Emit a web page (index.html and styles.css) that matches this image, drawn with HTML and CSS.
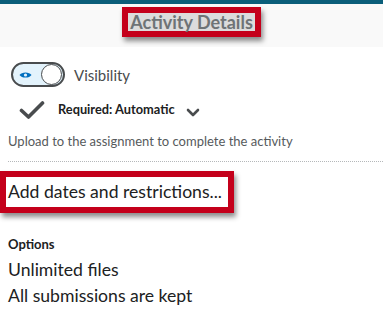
FILE: index.html
```html
<!DOCTYPE html>
<html lang="en">
<head>
  <meta charset="UTF-8">
  <title>Activity Details</title>
  <link rel="stylesheet" href="styles.css">
</head>
<body>

  <div class="top-bar"></div>

  <div class="header">
    <h1 class="header-title">Activity Details</h1>
  </div>

  <div class="panel">

    <div class="visibility-row">
      <div class="toggle">
        <svg class="toggle-eye" width="13" height="8" viewBox="0 0 13 8">
          <path d="M0.5 4 C2.5 0.6 10.5 0.6 12.5 4 C10.5 7.4 2.5 7.4 0.5 4 Z" fill="#006fbf"/>
          <circle cx="6.5" cy="4" r="1.6" fill="#e3f3fc"/>
        </svg>
        <span class="toggle-knob"></span>
      </div>
      <span class="visibility-label">Visibility</span>
    </div>

    <div class="required-row">
      <svg class="required-check" width="26" height="20" viewBox="0 0 26 20">
        <path d="M2.5 10.5 L9.5 17 L23.5 3" fill="none" stroke="#494c4e" stroke-width="3.6" stroke-linecap="round" stroke-linejoin="round"/>
      </svg>
      <span class="required-label">Required: Automatic</span>
      <svg class="required-chevron" width="14" height="9" viewBox="0 0 14 9">
        <path d="M2 2 L7 7 L12 2" fill="none" stroke="#494c4e" stroke-width="2.6" stroke-linecap="round" stroke-linejoin="round"/>
      </svg>
    </div>

    <p class="completion-note">Upload to the assignment to complete the activity</p>

    <hr class="divider">

    <div class="dates-link">Add dates and restrictions...</div>

    <h2 class="options-title">Options</h2>
    <p class="option-line">Unlimited files</p>
    <p class="option-line">All submissions are kept</p>

  </div>

</body>
</html>
```

FILE: styles.css
```css
* {
  margin: 0;
  padding: 0;
  box-sizing: border-box;
}

body {
  font-family: 'Lato', 'Noto Sans', sans-serif;
  background-color: #fff;
  color: #202122;
  overflow: hidden;
}

.top-bar {
  height: 4px;
  background-color: #0b5e7a;
}

.header {
  height: 43px;
  background-color: #f9f9f9;
  display: flex;
  justify-content: center;
  align-items: flex-start;
  padding-top: 3px;
}

.header-title {
  font-size: 18px;
  font-weight: 700;
  color: #6e7376;
  line-height: 18px;
  background-color: #dcdcdc;
  border: 6px solid #c4001b;
  padding: 0 2px;
  box-shadow: 2px 4px 5px rgba(0, 0, 0, 0.45);
}

.panel {
  padding: 0 0 0 8px;
}

.visibility-row {
  display: flex;
  align-items: center;
  margin-top: 15px;
  padding-left: 3px;
}

.toggle {
  width: 54px;
  height: 25px;
  border: 2px solid #494c4e;
  border-radius: 13px;
  background-color: #e3f3fc;
  display: flex;
  align-items: center;
  justify-content: space-between;
  padding: 0 1px 0 6px;
}

.toggle-eye {
  display: block;
}

.toggle-knob {
  width: 21px;
  height: 21px;
  border-radius: 50%;
  border: 1.5px solid #494c4e;
  background-color: #fff;
}

.visibility-label {
  margin-left: 9px;
  font-size: 15px;
  color: #494c4e;
}

.required-row {
  display: flex;
  align-items: center;
  margin-top: 10px;
  padding-left: 11px;
}

.required-check {
  display: block;
  margin-top: 3px;
}

.required-label {
  margin-left: 13px;
  font-size: 12.8px;
  font-weight: 700;
  color: #202122;
}

.required-chevron {
  display: block;
  margin-left: 11px;
  margin-top: 8px;
}

.completion-note {
  margin-top: 13px;
  font-size: 13px;
  color: #565a5c;
}

.divider {
  border: none;
  border-top: 1px dotted #b5b8ba;
  margin-top: 12px;
}

.dates-link {
  display: inline-block;
  margin: 9px 0 0 -8px;
  border: 6px solid #c4001b;
  padding: 4px 6px 4px 2px;
  font-size: 17.6px;
  line-height: 22px;
  color: #202122;
  background-color: #fff;
  box-shadow: 2px 4px 5px rgba(0, 0, 0, 0.45);
}

.options-title {
  margin-top: 23px;
  font-size: 13px;
  font-weight: 700;
  color: #202122;
}

.option-line {
  margin-top: 8px;
  font-size: 17.6px;
  line-height: 19px;
  color: #202122;
}

.option-line + .option-line {
  margin-top: 7px;
}
```
